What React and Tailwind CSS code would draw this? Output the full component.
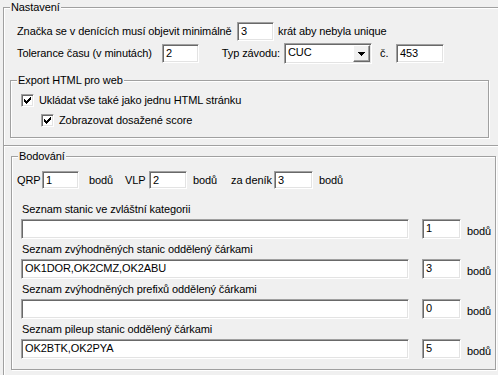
const sunken =
  "bg-white border border-t-[#a0a0a0] border-l-[#a0a0a0] border-b-white border-r-white shadow-[inset_1px_1px_0_#696969,inset_-1px_-1px_0_#e3e3e3]";

const Field = ({ value, className = "" }) => (
  <div className={`${sunken} pl-[3px] leading-[16px] whitespace-nowrap overflow-hidden ${className}`}>{value}</div>
);

const CheckMark = () => {
  // klasický 7x7 pixelový check
  const px = [
    [6, 0], [5, 1], [6, 1], [0, 2], [4, 2], [5, 2], [6, 2], [0, 3], [1, 3], [3, 3], [4, 3], [5, 3],
    [0, 4], [1, 4], [2, 4], [3, 4], [4, 4], [1, 5], [2, 5], [3, 5], [2, 6],
  ];
  return (
    <svg width="7" height="7" viewBox="0 0 7 7" shapeRendering="crispEdges">
      {px.map(([x, y]) => (
        <rect key={`${x}-${y}`} x={x} y={y} width="1" height="1" fill="#000" />
      ))}
    </svg>
  );
};

const Check = ({ label, className = "" }) => (
  <div className={`flex items-center h-[13px] ${className}`}>
    <div className={`${sunken} w-[13px] h-[13px] flex items-center justify-center`}>
      <CheckMark />
    </div>
    <span className="ml-[5px] leading-[13px]">{label}</span>
  </div>
);

const Group = ({ title, className = "", children }) => (
  <div className={`relative border border-[#a0a0a0] shadow-[inset_1px_1px_0_#fff,1px_1px_0_#fff] ${className}`}>
    <span className="absolute left-[6px] top-[-8px] bg-[#f0f0f0] px-[1px] leading-[14px]">{title}</span>
    {children}
  </div>
);

const ListRow = ({ label, value, points }) => (
  <div className="flex flex-col">
    <div className="h-[16px] leading-[16px] pl-[10px]">{label}</div>
    <div className="flex items-start mt-[2px] pl-[9px]">
      <Field value={value} className="w-[388px] h-[20px]" />
      <Field value={points} className="w-[39px] h-[20px] ml-[13px]" />
      <span className="ml-[6px] mt-[5px] leading-[14px]">bodů</span>
    </div>
  </div>
);

export default function App() {
  return (
    <div className="w-[498px] h-[375px] overflow-hidden bg-[#f0f0f0] text-[11px] tracking-[-0.1px] text-black font-['Liberation_Sans',Arial,sans-serif] pl-[3px] pt-[7px]">
      {/* Nastavení */}
      <Group title="Nastavení" className="w-[520px] h-[139px]">
        <div className="flex items-center h-[19px] mt-[14px] pl-[13px]">
          <span className="w-[220px]">Značka se v denících musí objevit minimálně</span>
          <Field value="3" className="w-[37px] h-[19px]" />
          <span className="ml-[4px]">krát aby nebyla unique</span>
        </div>
        <div className="flex items-center h-[21px] mt-[2px] pl-[13px]">
          <span className="w-[145px]">Tolerance času (v minutách)</span>
          <Field value="2" className="w-[37px] h-[19px]" />
          <span className="w-[85px] text-right pr-[4px]">Typ závodu:</span>
          <div className={`${sunken} w-[88px] h-[21px] flex items-stretch`}>
            <span className="flex-1 pl-[3px] leading-[17px]">CUC</span>
            <div className="w-[17px] my-[1px] mr-[1px] bg-[#f0f0f0] border border-t-white border-l-white border-b-[#696969] border-r-[#696969] shadow-[inset_-1px_-1px_0_#a0a0a0] flex items-center justify-center">
              <svg width="7" height="4" viewBox="0 0 7 4" shapeRendering="crispEdges">
                <path d="M0 0H7V1H6V2H5V3H4V4H3V3H2V2H1V1H0Z" fill="#000" />
              </svg>
            </div>
          </div>
          <span className="ml-[8px] w-[16px]">č.</span>
          <Field value="453" className="w-[48px] h-[19px]" />
        </div>

        {/* Export HTML pro web */}
        <Group title="Export HTML pro web" className="ml-[6px] mt-[16px] w-[479px] h-[58px]">
          <Check label="Ukládat vše také jako jednu HTML stránku" className="ml-[10px] mt-[13px]" />
          <Check label="Zobrazovat dosažené score" className="ml-[30px] mt-[7px]" />
        </Group>
      </Group>

      {/* Bodování */}
      <div className="border-l border-t border-[#a0a0a0] shadow-[inset_1px_1px_0_#fff] mt-[-1px] w-[520px] h-[240px] pt-[10px] pl-[7px]">
        <Group title="Bodování" className="w-[485px] h-[214px]">
          <div className="flex items-center h-[18px] mt-[14px] pl-[5px]">
            <span className="w-[25px]">QRP</span>
            <Field value="1" className="w-[37px] h-[18px]" />
            <span className="w-[46px] pl-[10px]">bodů</span>
            <span className="w-[24px]">VLP</span>
            <Field value="2" className="w-[38px] h-[18px]" />
            <span className="w-[44px] pl-[6px]">bodů</span>
            <span className="w-[43px]">za deník</span>
            <Field value="3" className="w-[39px] h-[18px]" />
            <span className="pl-[6px]">bodů</span>
          </div>
          <div className="flex flex-col gap-[2px] mt-[12px]">
            <ListRow label="Seznam stanic ve zvláštní kategorii" value="" points="1" />
            <ListRow label="Seznam zvýhodněných stanic oddělený čárkami" value="OK1DOR,OK2CMZ,OK2ABU" points="3" />
            <ListRow label="Seznam zvýhodněných prefixů oddělený čárkami" value="" points="0" />
            <ListRow label="Seznam pileup stanic oddělený čárkami" value="OK2BTK,OK2PYA" points="5" />
          </div>
        </Group>
      </div>
    </div>
  );
}
